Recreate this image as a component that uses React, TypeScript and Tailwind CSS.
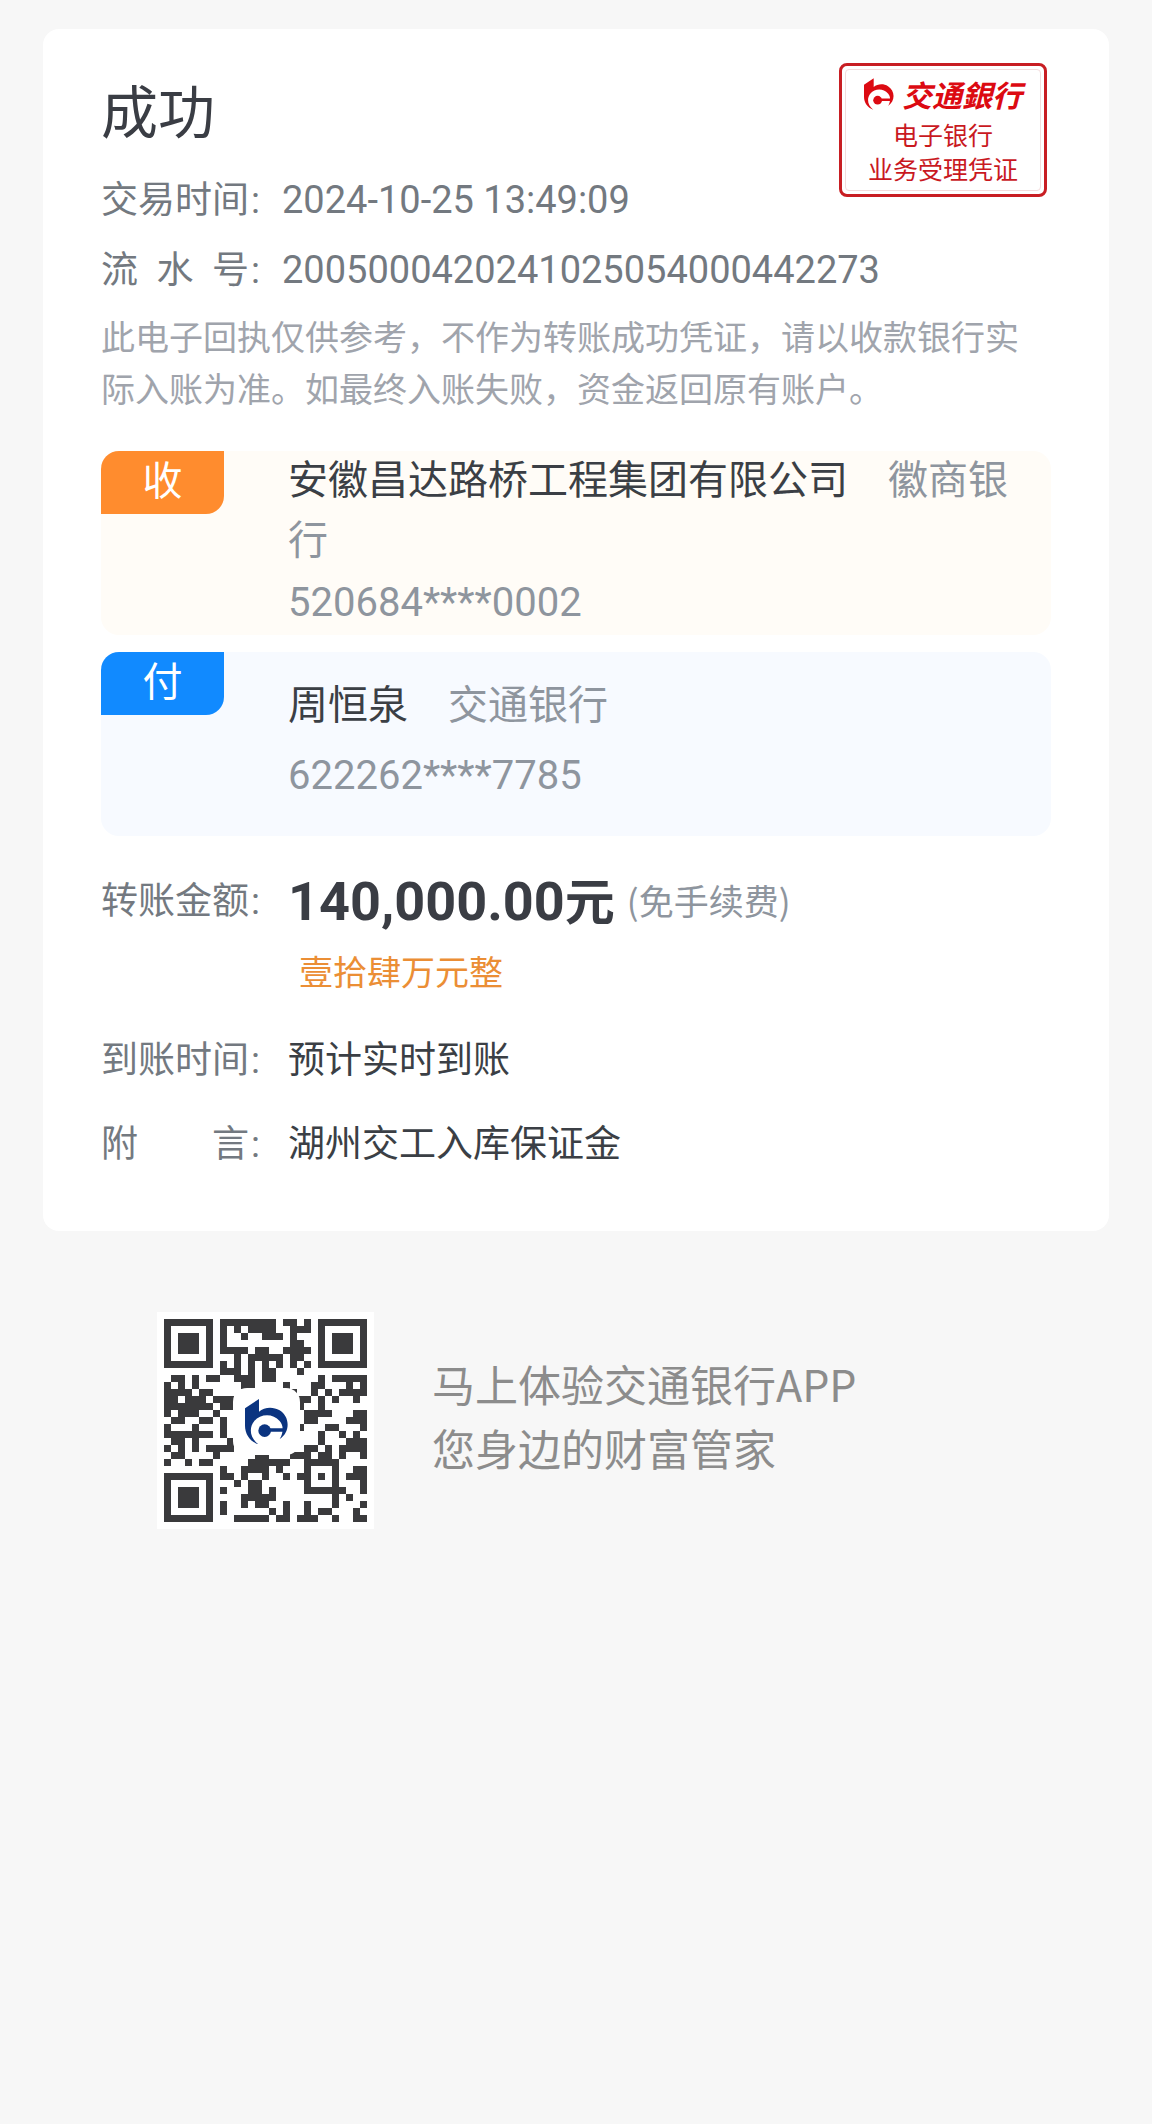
import type { ReactNode } from "react";

const QR_ROWS = [
  "11111110111111110110101111111",
  "10000010101011110011101000001",
  "10111010100100111010001011101",
  "10111010100000000011001011101",
  "10111010111101100111101011101",
  "10000010001011111011001000001",
  "11111110101010101010101111111",
  "00000000111010110001000000000",
  "01101011001110110000001011111",
  "10101000000110000100011000101",
  "11110110000000000010010101111",
  "11011101110000000001101010010",
  "11111110110000000001001000000",
  "10111001000000000000111100011",
  "01100110100000000000110000111",
  "10001000100000000001000110001",
  "11111110100000000000001001010",
  "01101000010000000000001000111",
  "10101011110000000000110101111",
  "01100001000001100011101101001",
  "10010110000011111100111110000",
  "00000000100111101000100010011",
  "11111110110100100101101010111",
  "10000010001011000000100010001",
  "10111010100011010000111111001",
  "10111010000111110000000010100",
  "10111010100101100100100010001",
  "10000010100000010100101100010",
  "11111110001111101101110010011",
];

const LOGO_BODY =
  "M0 28 L42 0 V38 C58 24 84 22 104 34 C134 52 138 98 104 120 C116 102 116 78 104 66 C84 42 46 44 28 66 C10 88 16 118 40 136 C16 128 0 106 0 80 Z";

function LogoShape() {
  return (
    <>
      <path d={LOGO_BODY} />
      <circle cx="59" cy="95" r="19" />
      <path d="M70 88 H122 L119 98 H70 Z" />
    </>
  );
}

function QrCode() {
  return (
    <svg viewBox="0 0 203 203" className="block size-[203px]" role="img" aria-label="二维码">
      <g fill="#3a3a3c">
        {QR_ROWS.flatMap((row, y) =>
          Array.from(row.matchAll(/1+/g), (m) => (
            <rect key={`${y}-${m.index}`} x={m.index! * 7} y={y * 7} width={m[0].length * 7} height={7} />
          )),
        )}
      </g>
      <rect x="69" y="69" width="67" height="67" rx="14" fill="#ffffff" />
      <g transform="translate(81 80) scale(0.333)" fill="#0b3480">
        <LogoShape />
      </g>
    </svg>
  );
}

function Stamp() {
  return (
    <div className="mr-1 h-[134px] w-[208px] shrink-0 rounded-lg border-[3px] border-[#c81e23] p-[3px]">
      <div className="flex h-full flex-col items-center rounded border border-[#f3dcdc] pt-[5px] text-[#c9191f]">
        <div className="flex items-center gap-2 text-[#dc0a12]">
          <svg viewBox="0 0 130 136" className="h-8 w-[30px]" fill="currentColor" aria-hidden="true">
            <LogoShape />
          </svg>
          <span className="text-[30px] leading-[38px] font-bold italic">交通銀行</span>
        </div>
        <span className="text-[25px] leading-[42px]">电子银行</span>
        <span className="text-[25px] leading-[26px]">业务受理凭证</span>
      </div>
    </div>
  );
}

function Label({ chars }: { chars: string }) {
  return (
    <span className="flex shrink-0 items-baseline text-[37px] text-[#737980]">
      <span className="flex w-[148px] justify-between">
        {Array.from(chars, (c) => (
          <span key={c}>{c}</span>
        ))}
      </span>
      <span className="w-3 pl-0.5 font-[Roboto,sans-serif]">:</span>
    </span>
  );
}

function Party({
  mark,
  badge,
  box,
  content,
  name,
  bank,
  account,
}: {
  mark: string;
  badge: string;
  box: string;
  content: string;
  name: string;
  bank: string;
  account: string;
}) {
  return (
    <section className={`flex h-[184px] items-start rounded-[18px] pr-4 ${box}`}>
      <span
        className={`w-[123px] shrink-0 rounded-tl-[18px] rounded-br-[18px] pb-[9px] text-center text-[40px] leading-[54px] text-white ${badge}`}
      >
        {mark}
      </span>
      <div className={`ml-[64px] flex min-w-0 flex-1 flex-col text-[40px] leading-[60px] text-[#8e959e] ${content}`}>
        <p>
          <span className="text-[#3b3f45]">{name}</span>
          {"\u3000"}
          {bank}
        </p>
        <p className="font-[Roboto,sans-serif]">{account}</p>
      </div>
    </section>
  );
}

function Row({ label, children }: { label: string; children: ReactNode }) {
  return (
    <div className="flex h-[56px] items-baseline gap-[27px] leading-[56px]">
      <Label chars={label} />
      <span className="text-[37px] text-[#3b3f45]">{children}</span>
    </div>
  );
}

export default function App() {
  return (
    <main className="flow-root min-h-screen bg-[#f7f7f7] font-['Noto_Sans_CJK_SC',sans-serif]">
      <article className="mx-[43px] mt-[29px] rounded-2xl bg-white px-[58px] pt-[34px] pb-[62px]">
        <header className="flex items-start justify-between">
          <div className="pt-[13px]">
            <h1 className="text-[57px] leading-[64px] text-[#3a3d44]">成功</h1>
            <div className="mt-[29px] flex h-[56px] items-baseline gap-[21px] leading-[56px] whitespace-nowrap">
              <Label chars="交易时间" />
              <time className="font-[Roboto,sans-serif] text-[38px] text-[#737980]">2024-10-25 13:49:09</time>
            </div>
          </div>
          <Stamp />
        </header>
        <div className="mt-[14px] flex h-[56px] items-baseline gap-[21px] leading-[56px]">
          <Label chars="流水号" />
          <span className="font-[Roboto,sans-serif] text-[38px] text-[#737980]">2005000420241025054000442273</span>
        </div>
        <p className="mt-[15px] text-[34px] leading-[52px] text-[#a0a4ac]">
          此电子回执仅供参考，不作为转账成功凭证，请以收款银行实际入账为准。如最终入账失败，资金返回原有账户。
        </p>

        <div className="mt-[37px] flex flex-col gap-[17px]">
          <Party
            mark="收"
            badge="bg-[#ff8c2e]"
            box="bg-[#fffcf7]"
            content="-mt-1 gap-1.5"
            name="安徽昌达路桥工程集团有限公司"
            bank="徽商银行"
            account="520684****0002"
          />
          <Party
            mark="付"
            badge="bg-[#118aff]"
            box="bg-[#f7faff]"
            content="gap-[14px] pt-5"
            name="周恒泉"
            bank="交通银行"
            account="622262****7785"
          />
        </div>

        <div className="mt-[32px] flex h-[64px] items-center leading-[64px]">
          <Label chars="转账金额" />
          <span className="ml-[27px] flex items-baseline font-bold text-[#3a3d44]">
            <span className="font-[Roboto,sans-serif] text-[54px]">140,000.00</span>
            <span className="text-[50px]">元</span>
          </span>
          <span className="ml-3 text-[35px] text-[#8e959e]">(免手续费)</span>
        </div>
        <p className="mt-[15px] ml-[198px] text-[34px] leading-[48px] text-[#eb8e35]">壹拾肆万元整</p>
        <div className="mt-[34px] flex flex-col gap-7">
          <Row label="到账时间">预计实时到账</Row>
          <Row label="附言">湖州交工入库保证金</Row>
        </div>
      </article>

      <footer className="mt-[81px] ml-[157px] flex items-center gap-[58px]">
        <div className="bg-white p-[7px]">
          <QrCode />
        </div>
        <p className="pb-3 text-[43px] leading-[64px] text-[#8c8c8c]">
          马上体验交通银行APP
          <br />
          您身边的财富管家
        </p>
      </footer>
    </main>
  );
}
